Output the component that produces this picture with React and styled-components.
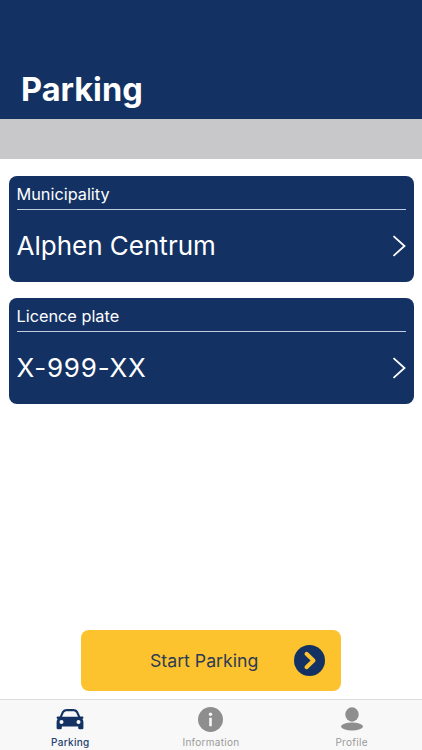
import React from "react";
import styled, { createGlobalStyle } from "styled-components";

const NAVY = "#133263";

const GlobalStyle = createGlobalStyle`
  html, body {
    margin: 0;
    padding: 0;
    background: #fff;
  }
  body {
    font-family: Inter, "Liberation Sans", sans-serif;
  }
`;

const CarIcon = () => (
  <svg width="30" height="24" viewBox="0 -1 30 24">
    <path
      fill={NAVY}
      d="M7 3.500C8 1.800 10 1 12 1h6c2 0 4 .8 5 2.500L25.200 8.500H27c1 0 1.400.6 1.400 1.200 0 .6-.4 1-1 1.200.7 1 1 2 1 3V20c0 .8-.5 1.200-1.200 1.200h-2.800c-.7 0-1.200-.4-1.200-1.200v-1.500H6.800V20c0 .8-.5 1.200-1.200 1.200H2.800c-.7 0-1.200-.4-1.200-1.200v-6c0-1 .3-2 1-3-.6-.2-1-.6-1-1.200 0-.6.4-1.200 1.400-1.200h1.800Z"
    />
    <path fill="#f8f8f8" d="M8.800 4.800C9.400 3.700 10.400 3.200 12 3.200h6c1.600 0 2.600.5 3.200 1.600L23 8.800H7Z" />
    <circle cx="6.500" cy="14" r="2" fill="#f8f8f8" />
    <circle cx="23.500" cy="14" r="2" fill="#f8f8f8" />
  </svg>
);

const InfoIcon = () => (
  <svg width="25" height="25" viewBox="0 0 25 25">
    <circle cx="12.500" cy="12.500" r="12.500" fill="#8e8e8e" />
    <circle cx="12.500" cy="7.200" r="1.700" fill="#f8f8f8" />
    <rect x="11.200" y="10.800" width="2.600" height="8.500" rx="0.5" fill="#f8f8f8" />
  </svg>
);

const ProfileIcon = () => (
  <svg width="24" height="24" viewBox="0 0 24 24">
    <ellipse cx="12" cy="7.500" rx="6.700" ry="7.200" fill="#8e8e8e" />
    <ellipse cx="12" cy="19.500" rx="11" ry="4" fill="#8e8e8e" />
  </svg>
);

const Chevron = () => (
  <svg width="14" height="24" viewBox="0 0 14 24">
    <path d="M1.500 2.200L12.500 12L1.500 21.800" fill="none" stroke="#fff" strokeWidth="1.800" />
  </svg>
);

const GoIcon = () => (
  <svg width="31" height="31" viewBox="0 0 31 31">
    <circle cx="15.500" cy="15.500" r="15.500" fill={NAVY} />
    <path
      d="M12.500 8.800L19.500 15.500L12.500 22.200"
      fill="none"
      stroke="#fdc32f"
      strokeWidth="4"
      strokeLinecap="round"
      strokeLinejoin="round"
    />
  </svg>
);

const SelectCard = ({ label, value, spaced }) => (
  <Card>
    <CardLabel>{label}</CardLabel>
    <CardRow>
      <CardValue $spaced={spaced}>{value}</CardValue>
      <Chevron />
    </CardRow>
  </Card>
);

const App = () => (
  <>
    <GlobalStyle />
    <Page>
      <Header>
        <Title>Parking</Title>
      </Header>
      <GreyBand />
      <Content>
        <SelectCard label="Municipality" value="Alphen Centrum" />
        <SelectCard label="Licence plate" value="X-999-XX" spaced />
      </Content>
      <StartButton>
        <StartLabel>Start Parking</StartLabel>
        <GoIcon />
      </StartButton>
      <TabBar>
        <Tab>
          <TabIcon><CarIcon /></TabIcon>
          <TabLabel $active>Parking</TabLabel>
        </Tab>
        <Tab>
          <TabIcon><InfoIcon /></TabIcon>
          <TabLabel>Information</TabLabel>
        </Tab>
        <Tab>
          <TabIcon><ProfileIcon /></TabIcon>
          <TabLabel>Profile</TabLabel>
        </Tab>
      </TabBar>
    </Page>
  </>
);

export default App;

const Page = styled.div`
  width: 422px;
  height: 750px;
  display: flex;
  flex-direction: column;
  overflow: hidden;
  background: #fff;
`;

const Header = styled.header`
  height: 119px;
  box-sizing: border-box;
  padding: 0 21px 7px;
  display: flex;
  align-items: flex-end;
  background: ${NAVY};
`;

const Title = styled.h1`
  margin: 0;
  font-size: 32.5px;
  line-height: 44px;
  font-weight: 700;
  color: #fff;
`;

const GreyBand = styled.div`
  height: 40px;
  background: #c8c8ca;
`;

const Content = styled.main`
  flex: 1;
  padding: 17px 8.5px 0;
  display: flex;
  flex-direction: column;
  gap: 16px;
`;

const Card = styled.section`
  height: 106px;
  box-sizing: border-box;
  padding: 8px 8px 0;
  border-radius: 8px;
  background: ${NAVY};
  color: #fff;
`;

const CardLabel = styled.div`
  height: 25px;
  font-size: 16.3px;
  line-height: 21px;
  border-bottom: 1px solid #c3cde0;
`;

const CardRow = styled.div`
  height: 72px;
  display: flex;
  align-items: center;
  justify-content: space-between;
`;

const CardValue = styled.div`
  font-size: 26px;
  line-height: 32px;
  letter-spacing: ${({ $spaced }) => ($spaced ? "0.8px" : "0")};
`;

const StartButton = styled.button`
  width: 260px;
  height: 61px;
  margin: 0 auto 8px;
  padding: 0 16px 0 69px;
  border: 0;
  border-radius: 8px;
  display: flex;
  align-items: center;
  justify-content: space-between;
  background: #fdc32f;
  font-family: inherit;
`;

const StartLabel = styled.span`
  font-size: 17.7px;
  color: #2c3b55;
`;

const TabBar = styled.nav`
  height: 50px;
  display: grid;
  grid-template-columns: repeat(3, 1fr);
  border-top: 1px solid #dcdcdc;
  background: #f8f8f8;
`;

const Tab = styled.div`
  display: flex;
  flex-direction: column;
  align-items: center;
  padding-top: 7px;
`;

const TabIcon = styled.div`
  height: 26px;
  display: flex;
  align-items: flex-start;
  justify-content: center;
`;

const TabLabel = styled.span`
  margin-top: 3px;
  font-size: 10px;
  line-height: 13px;
  letter-spacing: 0.3px;
  font-weight: ${({ $active }) => ($active ? 500 : 400)};
  color: ${({ $active }) => ($active ? "#24416f" : "#9a9a9a")};
`;
